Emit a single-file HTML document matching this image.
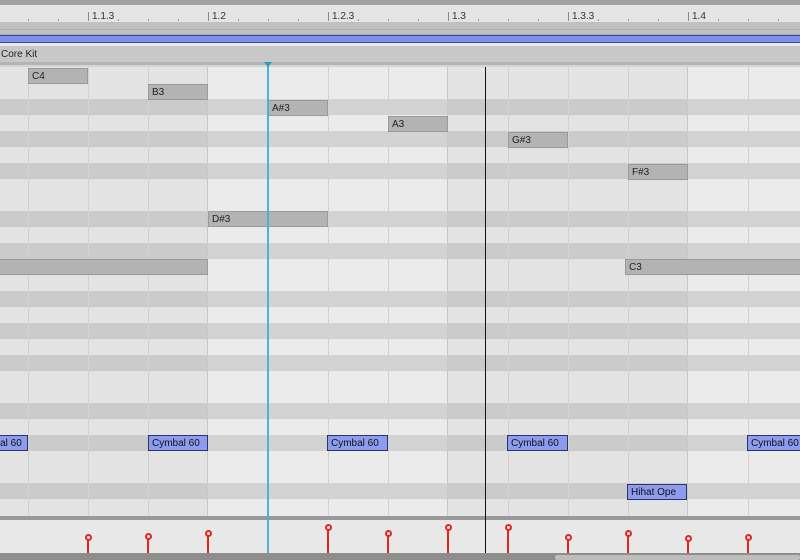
<!DOCTYPE html>
<html><head><style>
*{margin:0;padding:0;box-sizing:border-box}
body{width:800px;height:560px;overflow:hidden;background:#e6e6e6;font-family:"Liberation Sans",sans-serif;position:relative}
div{position:absolute}
.n{height:16px;background:#b3b3b3;border:1px solid #9a9a9a;font-size:10px;color:#222;padding:2px 0 0 3px;line-height:11px}
.c{height:16px;background:#8c9cf0;border:1px solid #2c3460;font-size:10px;color:#111;padding:2px 0 0 3px;line-height:11px;white-space:nowrap;overflow:hidden}
.lbl{top:11px;font-size:10px;color:#333}
.tk{top:12px;width:1px;height:9px;background:#888}
.dt{top:19px;width:1px;height:2px;background:#999}
.st{width:2px;background:#e0281e;bottom:7px}
.hd{width:7px;height:7px;border:2px solid #e0281e;border-radius:50%;background:#eee}
</style></head><body>
<div style="left:0;top:0;width:800px;height:5px;background:#a2a2a2"></div>
<div style="left:0;top:5px;width:800px;height:17px;background:#e4e4e4"></div>
<div style="left:0;top:22px;width:800px;height:13px;background:#c0c0c0;border-bottom:1px solid #aaa"></div>
<div style="left:0;top:29px;width:800px;height:1px;background:#b0b0b0"></div>
<div style="left:0;top:35px;width:800px;height:8px;background:#7b8ff0;border-top:1px solid #3b4a8c;border-bottom:1px solid #3b4a8c"></div>
<div style="left:0;top:43px;width:800px;height:3px;background:#e8e8e8"></div>
<div style="left:0;top:46px;width:800px;height:16px;background:#c8c8c8;font-size:10px;color:#222;padding:3px 0 0 1px">Core Kit</div>
<div style="left:0;top:62px;width:800px;height:3px;background:#b4b4b4"></div>
<div style="left:0;top:65px;width:800px;height:2px;background:#d4d4d4"></div>

<div class="dt" style="left:28px"></div><div class="dt" style="left:58px"></div><div class="dt" style="left:118px"></div><div class="dt" style="left:148px"></div><div class="dt" style="left:178px"></div>
<div class="dt" style="left:238px"></div><div class="dt" style="left:268px"></div><div class="dt" style="left:298px"></div><div class="dt" style="left:358px"></div><div class="dt" style="left:388px"></div><div class="dt" style="left:418px"></div>
<div class="dt" style="left:478px"></div><div class="dt" style="left:508px"></div><div class="dt" style="left:538px"></div><div class="dt" style="left:598px"></div><div class="dt" style="left:628px"></div><div class="dt" style="left:658px"></div>
<div class="dt" style="left:718px"></div><div class="dt" style="left:748px"></div><div class="dt" style="left:778px"></div>

<div class="tk" style="left:88px"></div><div class="lbl" style="left:92px">1.1.3</div>
<div class="tk" style="left:208px"></div><div class="lbl" style="left:212px">1.2</div>
<div class="tk" style="left:328px"></div><div class="lbl" style="left:332px">1.2.3</div>
<div class="tk" style="left:448px"></div><div class="lbl" style="left:452px">1.3</div>
<div class="tk" style="left:568px"></div><div class="lbl" style="left:572px">1.3.3</div>
<div class="tk" style="left:688px"></div><div class="lbl" style="left:692px">1.4</div>

<div style="left:0;top:67px;width:800px;height:449px;overflow:hidden">
<svg width="800" height="449" style="position:absolute;left:0;top:0">
<rect x="0" y="0" width="800" height="449" fill="#ebebeb"/>
<rect x="0" y="0" width="208" height="449" fill="#e3e3e3"/>
<rect x="448" y="0" width="240" height="449" fill="#e3e3e3"/>
<g fill="#000" fill-opacity="0.1">
<rect x="0" y="32" width="800" height="16"/>
<rect x="0" y="64" width="800" height="16"/>
<rect x="0" y="96" width="800" height="16"/>
<rect x="0" y="144" width="800" height="16"/>
<rect x="0" y="176" width="800" height="16"/>
<rect x="0" y="224" width="800" height="16"/>
<rect x="0" y="256" width="800" height="16"/>
<rect x="0" y="288" width="800" height="16"/>
<rect x="0" y="336" width="800" height="16"/>
<rect x="0" y="368" width="800" height="16"/>
<rect x="0" y="416" width="800" height="16"/>
</g>
<g stroke="#d2d2d2" stroke-width="1">
<line x1="28.5" y1="0" x2="28.5" y2="449"/><line x1="88.5" y1="0" x2="88.5" y2="449"/><line x1="148.5" y1="0" x2="148.5" y2="449"/><line x1="207.5" y1="0" x2="207.5" y2="449" stroke="#c8c8c8"/><line x1="268.5" y1="0" x2="268.5" y2="449"/><line x1="328.5" y1="0" x2="328.5" y2="449"/><line x1="388.5" y1="0" x2="388.5" y2="449"/><line x1="447.5" y1="0" x2="447.5" y2="449" stroke="#c8c8c8"/><line x1="508.5" y1="0" x2="508.5" y2="449"/><line x1="568.5" y1="0" x2="568.5" y2="449"/><line x1="628.5" y1="0" x2="628.5" y2="449"/><line x1="687.5" y1="0" x2="687.5" y2="449" stroke="#c8c8c8"/><line x1="748.5" y1="0" x2="748.5" y2="449"/>
</g>
</svg>
</div>

<div class="n" style="left:28px;top:68px;width:60px">C4</div>
<div class="n" style="left:148px;top:84px;width:60px">B3</div>
<div class="n" style="left:268px;top:100px;width:60px">A#3</div>
<div class="n" style="left:388px;top:116px;width:60px">A3</div>
<div class="n" style="left:508px;top:132px;width:60px">G#3</div>
<div class="n" style="left:628px;top:164px;width:60px">F#3</div>
<div class="n" style="left:208px;top:211px;width:120px">D#3</div>
<div class="n" style="left:-2px;top:259px;width:210px"></div>
<div class="n" style="left:625px;top:259px;width:180px">C3</div>

<div class="c" style="left:-30px;top:435px;width:58px">Cymbal 60</div>
<div class="c" style="left:148px;top:435px;width:60px">Cymbal 60</div>
<div class="c" style="left:327px;top:435px;width:61px">Cymbal 60</div>
<div class="c" style="left:507px;top:435px;width:61px">Cymbal 60</div>
<div class="c" style="left:747px;top:435px;width:60px">Cymbal 60</div>
<div class="c" style="left:627px;top:484px;width:60px">Hihat Ope</div>

<div style="left:0;top:516px;width:800px;height:4px;background:#999"></div>
<div style="left:0;top:520px;width:800px;height:33px;background:#e8e8e8"></div>
<div style="left:0;top:553px;width:800px;height:7px;background:#8e8e8e"></div>
<div style="left:555px;top:555px;width:245px;height:5px;background:#bdbdbd;border-radius:2px"></div>

<div style="left:267px;top:62px;width:2px;height:491px;background:#4db3d4"></div>
<div style="left:264px;top:62px;width:0;height:0;border-left:4px solid transparent;border-right:4px solid transparent;border-top:5px solid #2a9cc4"></div>
<div style="left:485px;top:67px;width:1px;height:486px;background:#111"></div>

<div class="st" style="left:87px;top:539px"></div><div class="hd" style="left:84.5px;top:534px"></div>
<div class="st" style="left:147px;top:538px"></div><div class="hd" style="left:144.5px;top:533px"></div>
<div class="st" style="left:207px;top:535px"></div><div class="hd" style="left:204.5px;top:530px"></div>
<div class="st" style="left:327px;top:529px"></div><div class="hd" style="left:324.5px;top:524px"></div>
<div class="st" style="left:387px;top:535px"></div><div class="hd" style="left:384.5px;top:530px"></div>
<div class="st" style="left:447px;top:529px"></div><div class="hd" style="left:444.5px;top:524px"></div>
<div class="st" style="left:507px;top:529px"></div><div class="hd" style="left:504.5px;top:524px"></div>
<div class="st" style="left:567px;top:539px"></div><div class="hd" style="left:564.5px;top:534px"></div>
<div class="st" style="left:627px;top:535px"></div><div class="hd" style="left:624.5px;top:530px"></div>
<div class="st" style="left:687px;top:540px"></div><div class="hd" style="left:684.5px;top:535px"></div>
<div class="st" style="left:747px;top:539px"></div><div class="hd" style="left:744.5px;top:534px"></div>
</body></html>
